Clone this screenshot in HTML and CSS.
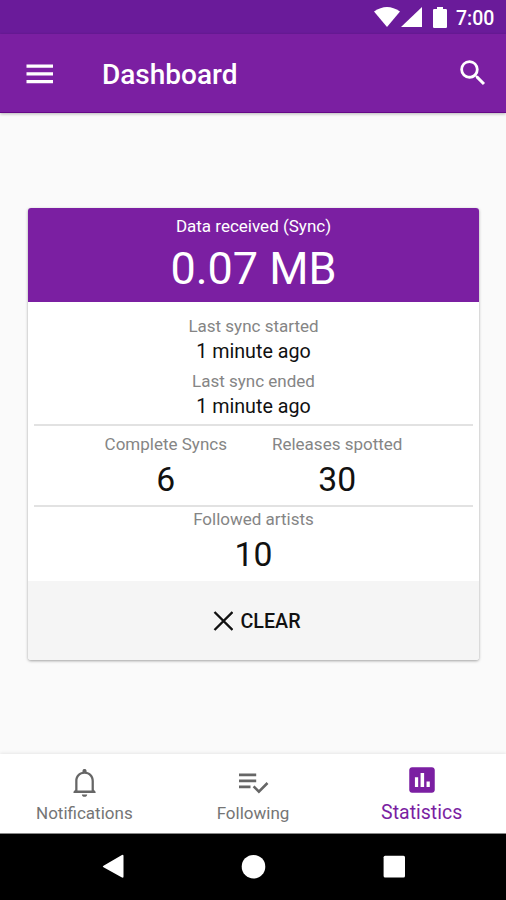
FILE: index.html
```html
<!DOCTYPE html>
<html lang="en">
<head>
<meta charset="utf-8">
<title>Dashboard</title>
<link rel="stylesheet" href="styles.css">
</head>
<body>
<div class="status-bar">
  <svg class="wifi" width="26" height="20" viewBox="0 0 26 20"><path d="M0 4.500Q13-4.500 26 4.500L13 20Z"/></svg>
  <svg class="signal" width="21" height="20" viewBox="0 0 21 20"><path d="M21 0V20H0Z"/></svg>
  <svg class="battery" width="14" height="21" viewBox="0 0 14 21"><path d="M4 0h6v2h2.800q1.200 0 1.200 1.200V20q0 1-1.200 1H1.200Q0 21 0 20V3.200Q0 2 1.200 2H4Z"/></svg>
  <span class="clock">7:00</span>
</div>
<header class="toolbar">
  <svg class="menu" width="27" height="20" viewBox="0 0 27 20"><path d="M.5.5h26.500v3.300H.5zM.5 8.200h26.500v3.300H.5zM.5 16h26.500v3.300H.5z"/></svg>
  <h1 class="title">Dashboard</h1>
  <svg class="search" width="34" height="34" viewBox="0 0 24 24"><path d="M15.500 14h-.790l-.280-.270A6.470 6.470 0 0 0 16 9.500 6.500 6.500 0 1 0 9.500 16c1.610 0 3.090-.590 4.230-1.570l.270.280v.790l5 4.990L20.490 19l-4.990-5zm-6 0C7.010 14 5 11.990 5 9.500S7.010 5 9.500 5 14 7.010 14 9.500 11.990 14 9.500 14z"/></svg>
</header>
<main class="content">
  <section class="card">
    <div class="hero">
      <div class="hero-label">Data received (Sync)</div>
      <div class="hero-value">0.07 MB</div>
    </div>
    <div class="stats">
      <div class="times">
        <div class="label">Last sync started</div>
        <div class="time">1 minute ago</div>
        <div class="label">Last sync ended</div>
        <div class="time">1 minute ago</div>
      </div>
      <div class="counts">
        <div class="count">
          <div class="label">Complete Syncs</div>
          <div class="number">6</div>
        </div>
        <div class="count">
          <div class="label">Releases spotted</div>
          <div class="number">30</div>
        </div>
      </div>
      <div class="artists">
        <div class="label">Followed artists</div>
        <div class="number">10</div>
      </div>
    </div>
    <div class="clear">
      <svg width="20" height="20" viewBox="0 0 20 20"><path d="M1.500 1L19.500 19M19.500 1L1.500 19"/></svg>
      <span>CLEAR</span>
    </div>
  </section>
</main>
<nav class="tabs">
  <div class="tab">
    <svg class="tab-icon" width="34" height="34" viewBox="0 0 24 24"><path d="M10 21h4c0 1.100-.9 1.800-2 1.800S10 22.100 10 21zM19 17.500V11c0-3.250-1.650-5.850-4.500-6.700L13.500 4V3.300C13.500 2.500 12.830 2 12 2s-1.500.5-1.500 1.300V4l-1 .3C6.650 5.150 5 7.750 5 11v6.500L3.700 19v1h16.600v-1zM17.300 18H6.700v-7C6.700 8 8.700 5.500 12 5.500S17.300 8 17.300 11z" transform="translate(1.100 .3) scale(.94)"/></svg>
    <span>Notifications</span>
  </div>
  <div class="tab">
    <svg class="tab-icon" width="34" height="34" viewBox="0 0 34 34"><path d="M3 7.600h17.200v2.600H3zM3 13.600h17.200v2.600H3zM3 19.600h11.500v2.600H3z"/><path class="tick" d="M17.600 20.300l5.300 5.300L31.500 17"/></svg>
    <span>Following</span>
  </div>
  <div class="tab active">
    <svg class="tab-icon" width="34" height="34" viewBox="0 0 24 24"><path d="M19 3H5c-1.100 0-2 .9-2 2v14c0 1.100.9 2 2 2h14c1.100 0 2-.9 2-2V5c0-1.100-.9-2-2-2zM9.300 17H7v-7h2.300v7zm4.200 0h-2.500V7h2.500v10zm4 0h-2.300v-4h2.300v4z"/></svg>
    <span>Statistics</span>
  </div>
</nav>
<footer class="system-nav">
  <svg width="506" height="67" viewBox="0 0 506 67"><path d="M103.500 32.700L121.500 22.200Q123.500 21 123.500 23V43.500Q123.500 45.500 121.500 44.300L103.500 34.300Q102 33.500 103.500 32.700Z"/><circle cx="253.500" cy="33.700" r="11.800"/><rect x="383.600" y="22.800" width="21.400" height="21.800" rx="1.500"/></svg>
</footer>
</body>
</html>
```

FILE: styles.css
```css
* { box-sizing: border-box; }
body {
  margin: 0;
  height: 900px;
  display: flex;
  flex-direction: column;
  overflow: hidden;
  background: #fafafa;
  color: #111;
  font-family: Roboto, "Liberation Sans", sans-serif;
}
svg { display: block; flex: none; }
.status-bar {
  height: 34px;
  display: flex;
  align-items: flex-start;
  padding: 7px 0 0 374px;
  background: #6a1b9a;
  color: #fff;
  fill: #fff;
}
.signal { margin-left: 1px; }
.battery { margin-left: 11px; }
.clock {
  margin-left: 9px;
  font-size: 19.500px;
  font-weight: 500;
  line-height: 24px;
}
.toolbar {
  height: 79px;
  flex: none;
  display: flex;
  align-items: center;
  padding: 0 16px 0 26px;
  background: #7b1fa2;
  border-bottom: 1px solid #650787;
  box-shadow: 0 1px 3px rgba(0, 0, 0, .28);
  color: #fff;
  fill: #fff;
}
.menu { margin-top: 1px; }
.title {
  margin: 3px 0 0 49px;
  flex: 1;
  font-size: 28px;
  font-weight: 500;
  line-height: 34px;
}
.content { flex: 1; padding: 95px 27px 0 28px; }
.card {
  height: 452px;
  display: flex;
  flex-direction: column;
  overflow: hidden;
  border-radius: 3px;
  background: #fff;
  box-shadow: 0 1px 3px rgba(0, 0, 0, .36);
  text-align: center;
}
.hero {
  height: 94px;
  padding-top: 7px;
  background: #7b1fa2;
  color: #fff;
}
.hero-label { font-size: 17px; line-height: 22px; }
.hero-value { font-size: 45px; line-height: 64px; }
.stats { height: 279px; padding: 0 6px; }
.times { height: 124px; padding-top: 13px; border-bottom: 2px solid #e2e2e2; }
.label { font-size: 17px; line-height: 22px; color: #858585; }
.time { font-size: 19.700px; line-height: 30px; margin-bottom: 3px; }
.counts {
  height: 81px;
  display: flex;
  justify-content: center;
  gap: 45px;
  padding-top: 7px;
  border-bottom: 2px solid #e2e2e2;
}
.number { font-size: 33.700px; line-height: 50px; }
.artists { padding-top: 1px; }
.clear {
  flex: 1;
  display: flex;
  align-items: center;
  justify-content: center;
  gap: 7px;
  padding-left: 7px;
  background: #f5f5f5;
  font-size: 19.700px;
  font-weight: 500;
}
.clear svg { fill: none; stroke: #111; stroke-width: 2.400; }
.clear span { padding-top: 2px; }
.tabs {
  height: 79px;
  flex: none;
  display: flex;
  margin-bottom: 1px;
  background: #fff;
  box-shadow: 0 1px 0 #888, 0 -1px 3px rgba(0, 0, 0, .08);
}
.tab {
  flex: 1;
  display: flex;
  flex-direction: column;
  align-items: center;
  padding-top: 12px;
  font-size: 17px;
  line-height: 24px;
  color: #757575;
  fill: #666;
}
.tick { fill: none; stroke: #666; stroke-width: 2.600; }
.active { padding-top: 9px; font-size: 19.500px; color: #7b1fa2; fill: #7b1fa2; }
.tab span { margin-top: 1px; }
.active span { margin-top: 4px; }
.system-nav { height: 66px; flex: none; background: #000; fill: #fff; }
.system-nav svg { margin-top: -1px; }
```
